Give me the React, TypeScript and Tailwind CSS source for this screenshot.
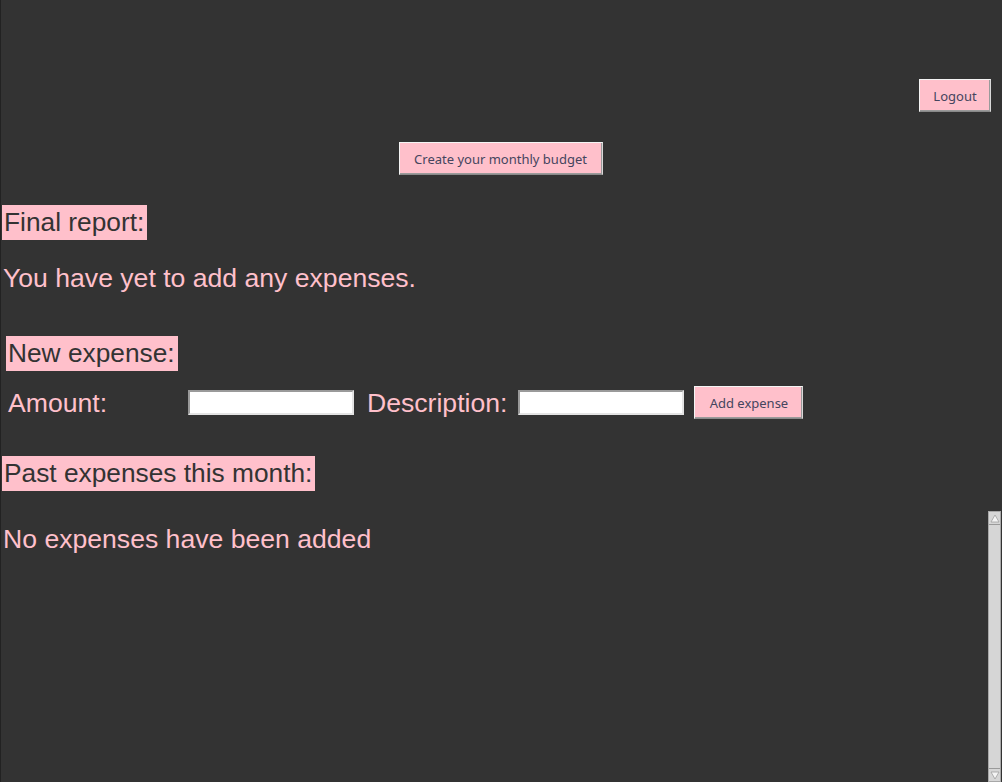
import React from "react";

const btn =
  "bg-[#ffc0cb] text-[#45455e] text-[13px] font-['Noto_Sans','Open_Sans',sans-serif] border border-t-[#f4f4f4] border-l-[#f4f4f4] border-r-[#d8d8d8] border-b-[#8a8a8a] shadow-[inset_-1px_-1px_0_#9a9a9a] flex items-center justify-center pt-[3px]";

const input =
  "bg-white h-[25px] w-[166px] border-2 border-t-[#9a9a9a] border-l-[#9a9a9a] border-r-[#e4e4e4] border-b-[#e4e4e4] outline-none";

function Heading({ children }: { children: React.ReactNode }) {
  return (
    <div className="flex">
      <h2 className="bg-[#ffc0cb] text-[#333333] text-[26.3px] leading-[35px] pl-[2px] pr-[3px]">
        {children}
      </h2>
    </div>
  );
}

export default function App() {
  return (
    <div className="h-[782px] overflow-hidden bg-[#333333] border-l border-[#222222] flex flex-col font-['Liberation_Sans',Arial,sans-serif]">
      <div className="flex justify-end pt-[79px] pr-[11px]">
        <button className={`${btn} w-[72px] h-[33px]`}>Logout</button>
      </div>
      <div className="flex justify-center mt-[30px] pr-[2px]">
        <button className={`${btn} w-[204px] h-[33px]`}>Create your monthly budget</button>
      </div>

      <div className="mt-[30px] pl-[1px]">
        <Heading>Final report:</Heading>
        <p className="text-[#ffc0cb] text-[26.6px] leading-[30px] mt-[23px] pl-[1px]">
          You have yet to add any expenses.
        </p>
      </div>

      <div className="mt-[43px] pl-[5px]">
        <Heading>New expense:</Heading>
        <div className="flex items-center mt-[15px] pl-[2px]">
          <span className="w-[180px] text-[#ffc0cb] text-[26.6px] leading-[30px]">Amount:</span>
          <input className={input} />
          <span className="ml-[13px] mr-[11px] text-[#ffc0cb] text-[26.6px] leading-[30px]">Description:</span>
          <input className={input} />
          <button className={`${btn} ml-[10px] w-[109px] h-[33px]`}>Add expense</button>
        </div>
      </div>

      <div className="mt-[37px] pl-[1px]">
        <Heading>Past expenses this month:</Heading>
      </div>

      <div className="flex flex-1 mt-[20px]">
        <div className="flex-1 pt-[13px] pl-[2px]">
          <p className="text-[#ffc0cb] text-[26.6px] leading-[30px]">No expenses have been added</p>
        </div>
        <div className="w-[13px] mr-[1px] bg-[#d6d6d6] border border-[#a8a8a8] flex flex-col justify-between">
          <div className="h-[13px] bg-[#d6d6d6] border-b border-[#9a9a9a] flex items-center justify-center">
            <svg width="10" height="9" viewBox="0 0 10 9">
              <path d="M5 1 L9 8 L1 8 Z" fill="#f4f4f4" stroke="#a0a0a0" strokeWidth="0.8" />
            </svg>
          </div>
          <div className="h-[13px] bg-[#d6d6d6] border-t border-[#9a9a9a] flex items-center justify-center">
            <svg width="10" height="9" viewBox="0 0 10 9">
              <path d="M1 1 L9 1 L5 8 Z" fill="#f4f4f4" stroke="#a0a0a0" strokeWidth="0.8" />
            </svg>
          </div>
        </div>
      </div>
    </div>
  );
}
